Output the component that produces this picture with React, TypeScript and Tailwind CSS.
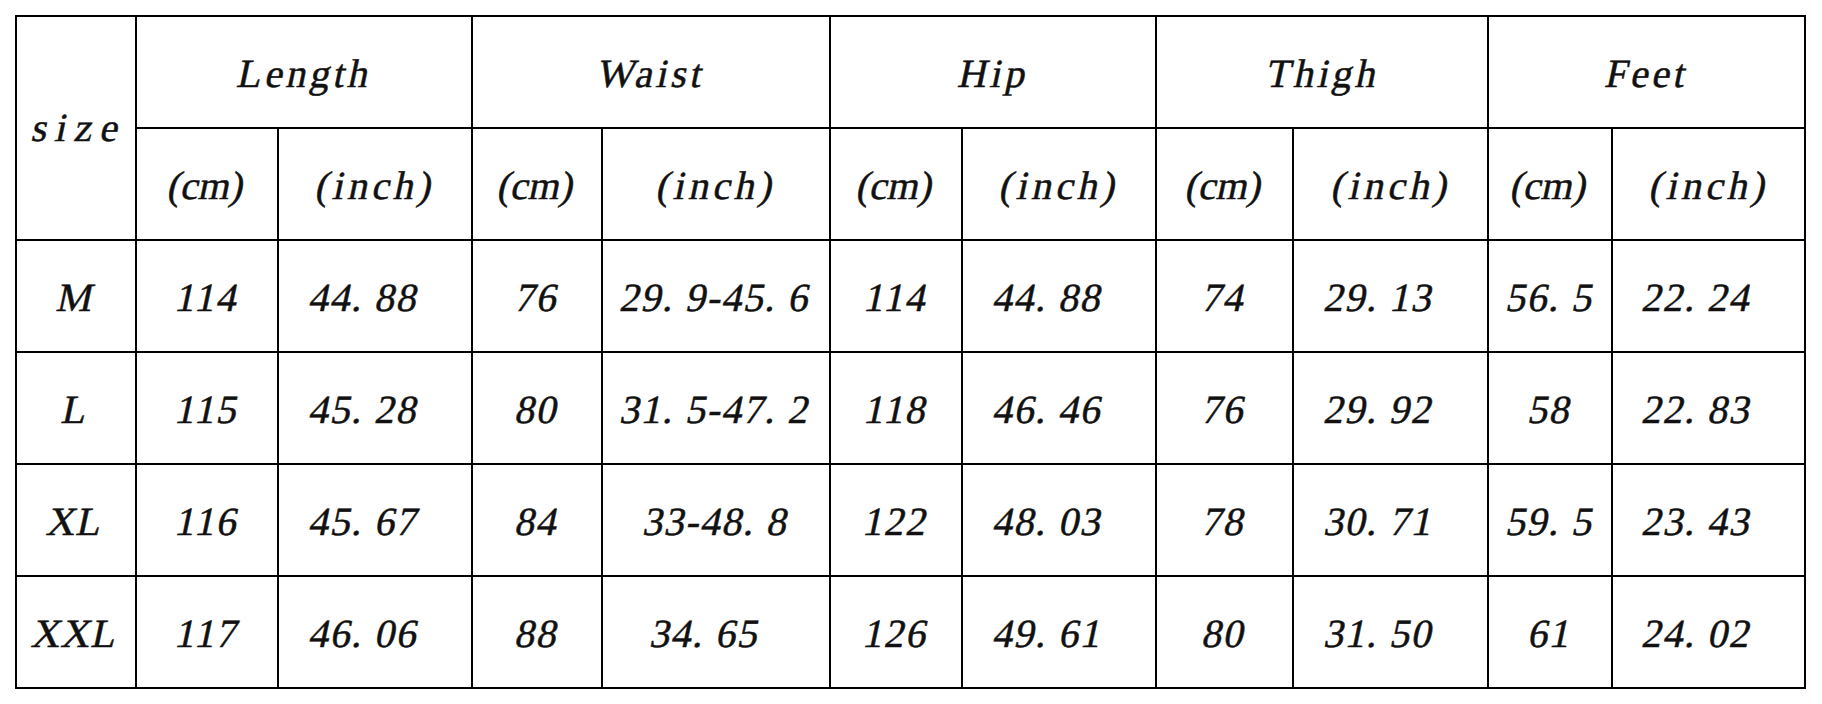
import React from 'react';

type Row = {
  size: string;
  cells: { v: string; shift?: boolean }[];
};

const rows: Row[] = [
  {
    size: 'M',
    cells: [
      { v: '114' }, { v: '44. 88', shift: true },
      { v: '76' }, { v: '29. 9-45. 6' },
      { v: '114' }, { v: '44. 88', shift: true },
      { v: '74' }, { v: '29. 13', shift: true },
      { v: '56. 5' }, { v: '22. 24', shift: true },
    ],
  },
  {
    size: 'L',
    cells: [
      { v: '115' }, { v: '45. 28', shift: true },
      { v: '80' }, { v: '31. 5-47. 2' },
      { v: '118' }, { v: '46. 46', shift: true },
      { v: '76' }, { v: '29. 92', shift: true },
      { v: '58' }, { v: '22. 83', shift: true },
    ],
  },
  {
    size: 'XL',
    cells: [
      { v: '116' }, { v: '45. 67', shift: true },
      { v: '84' }, { v: '33-48. 8' },
      { v: '122' }, { v: '48. 03', shift: true },
      { v: '78' }, { v: '30. 71', shift: true },
      { v: '59. 5' }, { v: '23. 43', shift: true },
    ],
  },
  {
    size: 'XXL',
    cells: [
      { v: '117' }, { v: '46. 06', shift: true },
      { v: '88' }, { v: '34. 65', shift: true },
      { v: '126' }, { v: '49. 61', shift: true },
      { v: '80' }, { v: '31. 50', shift: true },
      { v: '61' }, { v: '24. 02', shift: true },
    ],
  },
];

const groups = ['Length', 'Waist', 'Hip', 'Thigh', 'Feet'];

const cell = 'bg-white flex items-center justify-center';
// upright Times glyphs slanted, like the fake italic of the source
const txt = 'inline-block -skew-x-12 [-webkit-text-stroke:0.5px_#111]';

export default function App() {
  return (
    <div
      className="w-[1822px] h-[704px] bg-white pl-[15px] pt-[15px] text-[#111]"
      style={{ fontFamily: '"Liberation Serif", "Times New Roman", serif' }}
    >
      <div className="inline-grid grid-cols-[118px_140px_192px_128px_226px_130px_192px_135px_193px_122px_191px] auto-rows-[110px] gap-[2px] bg-black p-[2px] text-[40px] leading-none">
        {/* size header */}
        <div className={`${cell} row-span-2`}>
          <span className={`${txt} tracking-[8px] pl-[8px]`}>size</span>
        </div>

        {/* group headers */}
        {groups.map((g) => (
          <div key={g} className={`${cell} col-span-2 pt-[4px]`}>
            <span className={`${txt} tracking-[3.5px] pl-[3.5px]`}>{g}</span>
          </div>
        ))}

        {/* unit row */}
        {groups.map((g) => (
          <React.Fragment key={g + '-u'}>
            <div className={`${cell} pt-[4px]`}>
              <span className={txt}>(cm)</span>
            </div>
            <div className={`${cell} pt-[4px]`}>
              <span className={`${txt} tracking-[4px] pl-[4px]`}>(inch)</span>
            </div>
          </React.Fragment>
        ))}

        {/* data */}
        {rows.map((r) => (
          <React.Fragment key={r.size}>
            <div className={`${cell} pt-[4px]`}>
              <span className={`${txt} tracking-[1px]`}>{r.size}</span>
            </div>
            {r.cells.map((c, i) => (
              <div key={i} className={`${cell} pt-[4px] ${c.shift ? 'pr-[22px]' : ''}`}>
                <span className={`${txt} tracking-[1.5px] pl-[1.5px] whitespace-pre`}>{c.v}</span>
              </div>
            ))}
          </React.Fragment>
        ))}
      </div>
    </div>
  );
}
